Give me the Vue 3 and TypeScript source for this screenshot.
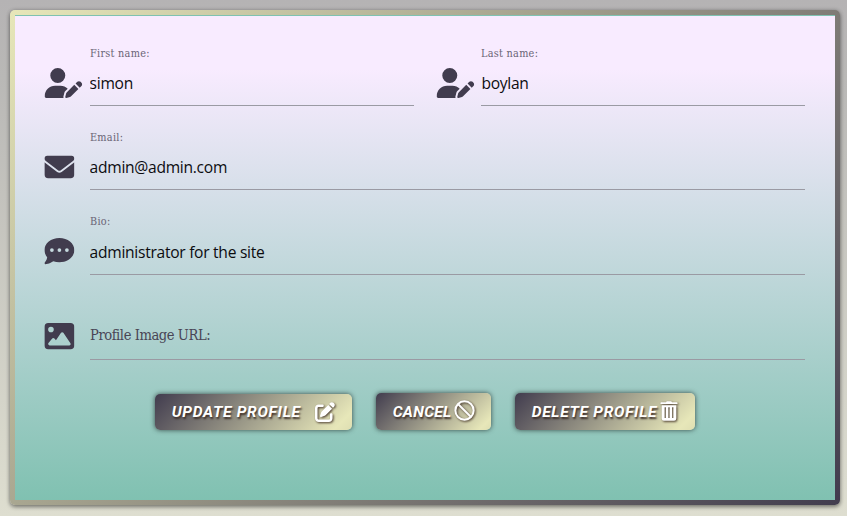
<script setup lang="ts">
import { ref } from 'vue'

interface Field {
  id: string
  label: string
  value: string
  icon: 'user' | 'email' | 'bio' | 'image'
  half?: boolean
}

const fields = ref<Field[]>([
  { id: 'first', label: 'First name:', value: 'simon', icon: 'user', half: true },
  { id: 'last', label: 'Last name:', value: 'boylan', icon: 'user', half: true },
  { id: 'email', label: 'Email:', value: 'admin@admin.com', icon: 'email' },
  { id: 'bio', label: 'Bio:', value: 'administrator for the site', icon: 'bio' },
  { id: 'image', label: 'Profile Image URL:', value: '', icon: 'image' },
])

const icons = {
  user: {
    box: '0 0 640 512',
    d: 'M224 256A128 128 0 1 0 224 0a128 128 0 1 0 0 256zm-45.7 48C79.8 304 0 383.8 0 482.3C0 498.7 13.3 512 29.7 512H322.8c-3.1-8.8-3.7-18.4-1.4-27.8l15-60.1c2.8-11.3 8.6-21.5 16.8-29.7l40.3-40.3c-32.1-31-75.7-50.1-123.9-50.1H178.3zm435.5-68.3c-15.6-15.6-40.9-15.6-56.6 0l-29.4 29.4 71 71 29.4-29.4c15.6-15.6 15.6-40.9 0-56.6l-14.4-14.4zM375.9 417c-4.1 4.1-7 9.2-8.4 14.9l-15 60.1c-1.4 5.5 .2 11.2 4.2 15.2s9.7 5.6 15.2 4.2l60.1-15c5.6-1.4 10.8-4.3 14.9-8.4L576.1 358.7l-71-71L375.9 417z',
  },
  email: {
    box: '0 0 512 512',
    d: 'M48 64C21.5 64 0 85.5 0 112c0 15.1 7.1 29.3 19.2 38.4L236.8 313.6c11.4 8.5 27 8.5 38.4 0L492.8 150.4c12.1-9.1 19.2-23.3 19.2-38.4c0-26.5-21.5-48-48-48H48zM0 176V384c0 35.3 28.7 64 64 64H448c35.3 0 64-28.7 64-64V176L294.4 339.2c-22.8 17.1-54 17.1-76.8 0L0 176z',
  },
  bio: {
    box: '0 0 512 512',
    d: 'M256 448c141.4 0 256-93.1 256-208S397.4 32 256 32S0 125.1 0 240c0 45.1 17.7 86.8 47.7 120.9c-1.9 24.5-11.4 46.3-21.4 62.9c-5.5 9.2-11.1 16.6-15.2 21.6c-2.1 2.5-3.7 4.4-4.9 5.7l-1.6 1.7c-4.6 4.6-5.9 11.4-3.4 17.4s8.3 9.9 14.8 9.9c28.7 0 57.6-8.9 81.6-19.3c22.9-10 42.4-21.9 54.3-30.6c31.8 11.5 67 17.9 104.1 17.9zM128 208a32 32 0 1 1 0 64 32 32 0 1 1 0-64zm128 0a32 32 0 1 1 0 64 32 32 0 1 1 0-64zm96 32a32 32 0 1 1 64 0 32 32 0 1 1-64 0z',
  },
  image: {
    box: '0 0 512 512',
    d: 'M0 96C0 60.7 28.7 32 64 32H448c35.3 0 64 28.7 64 64V416c0 35.3-28.7 64-64 64H64c-35.3 0-64-28.7-64-64V96zM323.8 202.5c-4.5-6.6-11.9-10.5-19.8-10.5s-15.4 3.9-19.8 10.5l-87 127.6L170.7 297c-4.6-5.7-11.5-9-18.7-9s-14.2 3.3-18.7 9l-64 80c-5.8 7.2-6.9 17.1-2.9 25.4s12.4 13.6 21.6 13.6h96 32H424c8.9 0 17.1-4.9 21.2-12.8s3.6-17.4-1.4-24.7l-120-176zM112 192a48 48 0 1 0 0-96 48 48 0 1 0 0 96z',
  },
}
</script>

<template>
  <main class="page">
    <div class="frame">
      <form class="panel" @submit.prevent>
        <div class="fields">
          <div v-for="f in fields" :key="f.id" class="field" :class="[f.icon, { half: f.half }]">
            <svg class="prefix" :class="{ wide: f.icon === 'user' }" :viewBox="icons[f.icon].box" aria-hidden="true">
              <path fill-rule="evenodd" :d="icons[f.icon].d" />
            </svg>
            <div class="control" :class="{ empty: !f.value }">
              <label :for="f.id">{{ f.label }}</label>
              <input :id="f.id" v-model="f.value" type="text" autocomplete="off" />
            </div>
          </div>
        </div>
        <div class="actions">
          <button class="btn update" type="submit">
            <span class="caption">UPDATE PROFILE</span>
            <svg class="edit" viewBox="0 0 512 512" aria-hidden="true">
              <path d="M471.6 21.7c-21.9-21.9-57.3-21.9-79.2 0L362.3 51.7l97.9 97.9 30.1-30.1c21.9-21.9 21.9-57.3 0-79.2L471.6 21.7zm-299.2 220c-6.1 6.1-10.8 13.6-13.5 21.9l-29.6 88.8c-2.9 8.6-.6 18.1 5.8 24.6s15.9 8.7 24.6 5.8l88.8-29.6c8.2-2.7 15.7-7.4 21.9-13.5L437.7 172.3 339.7 74.3 172.4 241.7zM96 64C43 64 0 107 0 160V416c0 53 43 96 96 96H352c53 0 96-43 96-96V320c0-17.7-14.3-32-32-32s-32 14.3-32 32v96c0 17.7-14.3 32-32 32H96c-17.7 0-32-14.3-32-32V160c0-17.7 14.3-32 32-32h96c17.7 0 32-14.3 32-32s-14.3-32-32-32H96z" />
            </svg>
          </button>
          <button class="btn cancel" type="button">
            <span class="caption">CANCEL</span>
            <svg class="ban" viewBox="0 0 20 20" aria-hidden="true">
              <circle cx="10" cy="10" r="8.7" />
              <path d="M3.8 3.8 16.2 16.2" />
            </svg>
          </button>
          <button class="btn delete" type="button">
            <span class="caption">DELETE PROFILE</span>
            <svg class="trash" viewBox="0 0 18 20" aria-hidden="true">
              <path fill-rule="evenodd" d="M6 1.3 6.8.3h4.4l.8 1h4.8q.7 0 .7.8v.8H.5v-.8q0-.8.7-.8zM1.7 4.3h14.6v13.2q0 2.2-2.2 2.2H3.9q-2.2 0-2.2-2.2zM4.6 6.3v10.8h1.3V6.3zm3.7 0v10.8h1.4V6.3zm3.8 0v10.8h1.3V6.3z" />
            </svg>
          </button>
        </div>
      </form>
    </div>
  </main>
</template>

<style>
body {
  margin: 0;
}
</style>

<style scoped>
.page {
  box-sizing: border-box;
  height: 516px;
  padding: 10px 7px 11px 10px;
  background: linear-gradient(#b5b3b4, #b9b8b6 15%, #deded0);
}
.frame {
  box-sizing: border-box;
  height: 495px;
  padding: 5px;
  border-radius: 5px;
  background: linear-gradient(135deg, #e7e7b9, #413c4e);
  box-shadow: 0 2px 4px rgba(0, 0, 0, 0.42), 0 0 4px rgba(0, 0, 0, 0.18);
}
.panel {
  box-sizing: border-box;
  height: 485px;
  padding: 22px 30px 0 29px;
  border-top: 1px solid #7fc2b1;
  background: linear-gradient(#f8ebff 11%, #80c1b1);
}
.fields {
  display: grid;
  grid-template-columns: 370px 370px;
  column-gap: 21px;
  grid-template-rows: 68px 68px 69px 69px;
  row-gap: 16px;
}
.field {
  grid-column: span 2;
  display: flex;
  align-items: flex-start;
}
.field.half {
  grid-column: span 1;
}
.prefix {
  flex: none;
  width: 30px;
  height: 30px;
  margin: 30px 16px 0 0;
  transform: translateX(0.4px);
  fill: #413c4e;
}
.prefix.wide {
  width: 38px;
  margin-right: 8px;
}
.half + .half .prefix {
  margin-left: 1px;
  margin-right: 7px;
}
.control {
  flex: 1;
  display: flex;
  flex-direction: column;
  height: 100%;
  box-sizing: border-box;
  border-bottom: 1px solid #9a9aa3;
}
label {
  height: 30px;
  line-height: 32px;
  font-family: 'DejaVu Serif Condensed', 'DejaVu Serif', serif;
  font-stretch: condensed;
  font-size: 10.8px;
  letter-spacing: 0.27px;
  color: #6a6475;
  white-space: nowrap;
}
input {
  box-sizing: border-box;
  width: 100%;
  height: 30px;
  padding: 0;
  border: 0;
  outline: 0;
  background: none;
  font: 15.6px 'Open Sans', sans-serif;
  letter-spacing: -0.28px;
  text-indent: -0.4px;
  color: #0c0c10;
}
.half + .half input {
  text-indent: 0.4px;
}
.bio input {
  height: 32px;
}
.empty label {
  height: 59px;
  line-height: 30px;
  padding-top: 29px;
  box-sizing: border-box;
  font-size: 14.6px;
  letter-spacing: -0.44px;
  color: #494555;
}
.empty input {
  height: 9px;
}
.actions {
  display: flex;
  align-items: flex-end;
  gap: 24px;
  height: 37px;
  margin: 33px 0 0 111px;
}
.btn {
  box-sizing: border-box;
  display: flex;
  align-items: center;
  justify-content: flex-start;
  height: 37px;
  padding: 0 0 0 16.7px;
  border: 0;
  border-radius: 5px;
  background: linear-gradient(135deg, #413c4e, #e7e7b9 92%, #dedeb2);
  box-shadow: 0 0 5px rgba(20, 30, 30, 0.75);
  color: #fff;
  font: italic 700 15.5px Roboto, sans-serif;
  letter-spacing: 0.72px;
  text-align: left;
  white-space: nowrap;
}
.caption {
  text-shadow: 1px 2px 2px #3c2d26;
}
.btn svg {
  flex: none;
  fill: #fff;
  filter: drop-shadow(1px 1px 1px #49392d);
}
.update {
  width: 197px;
  height: 36px;
}
.cancel {
  width: 115px;
  letter-spacing: 0.3px;
}
.delete {
  width: 180px;
}
.update .caption {
  width: 143.3px;
}
.cancel .caption {
  width: 61.5px;
}
.delete .caption {
  width: 128.5px;
}
.edit {
  width: 20px;
  height: 20px;
}
.btn .ban {
  width: 21px;
  height: 21px;
  margin-bottom: 2px;
  fill: none;
  stroke: #fff;
  stroke-width: 1.9;
}
.trash {
  width: 18px;
  height: 20px;
  margin-bottom: 2px;
}
</style>
